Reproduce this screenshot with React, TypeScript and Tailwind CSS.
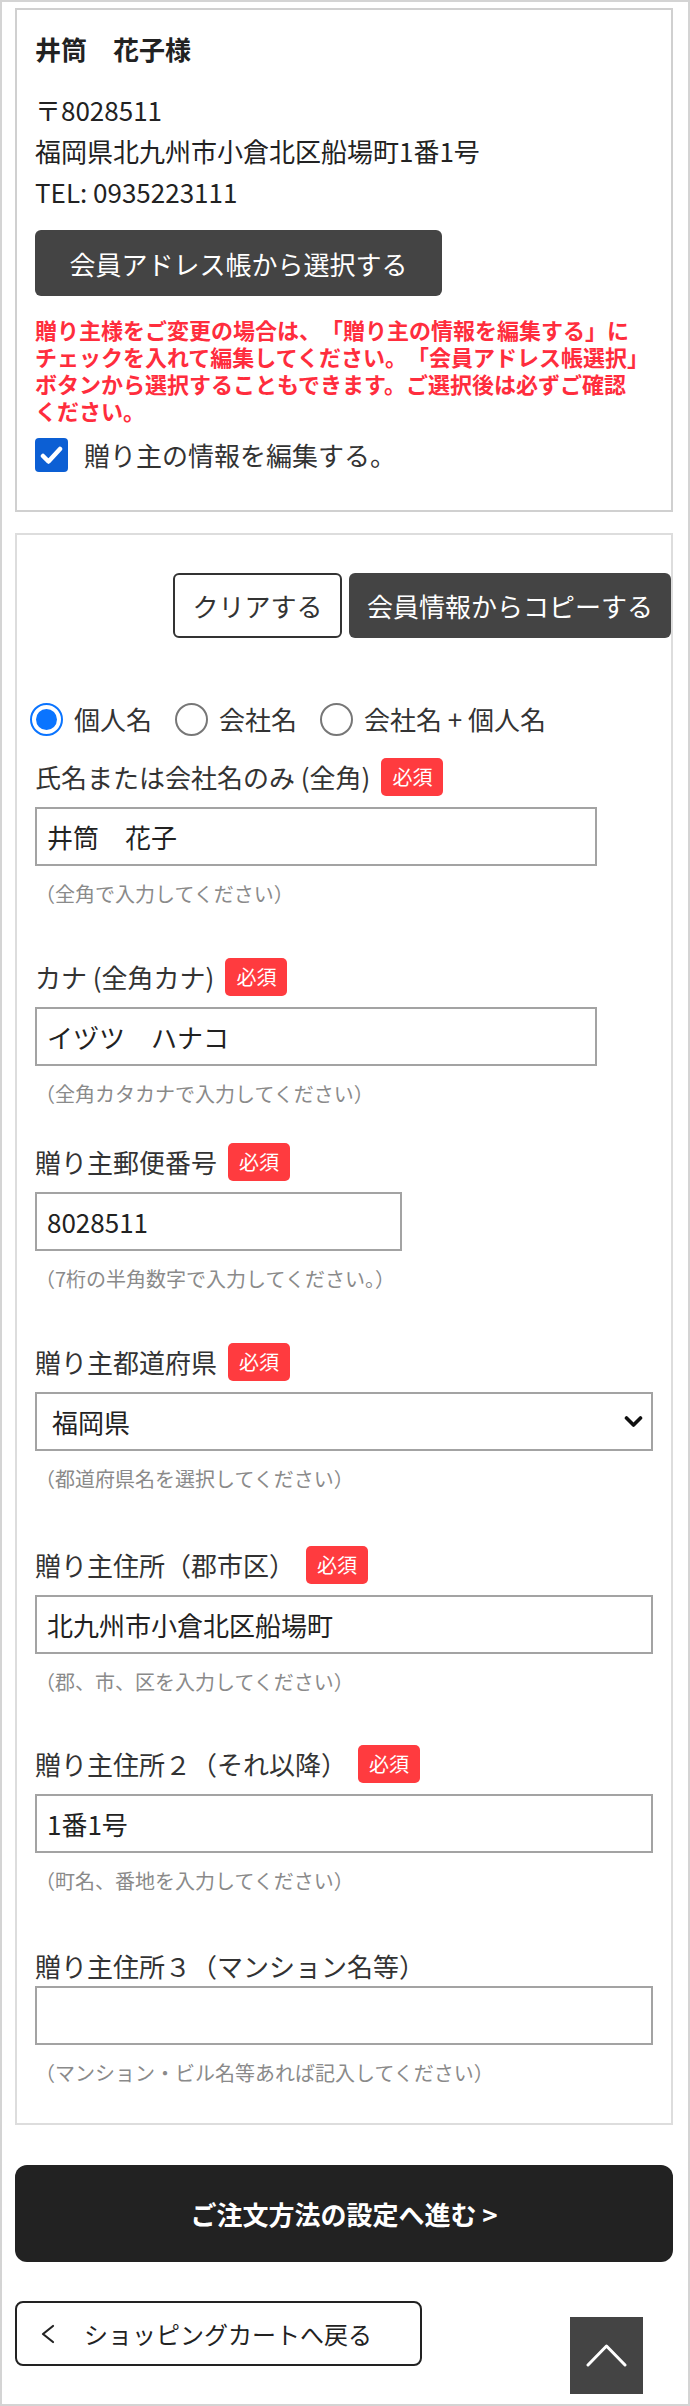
import React from 'react'

const font = "font-['Noto_Sans_CJK_JP','Noto_Sans',sans-serif]"

interface FieldProps {
  label: string
  required?: boolean
  value: string
  hint: string
  wrapClass: string
  inputClass: string
  inputGap?: string
}

function Badge() {
  return (
    <span className="flex h-[38px] items-center rounded-[5px] bg-[#ff3b3f] px-[11px] text-[20px] leading-none text-white">
      必須
    </span>
  )
}

function Field({ label, required, value, hint, wrapClass, inputClass, inputGap = 'mt-[11px]' }: FieldProps) {
  return (
    <div className={wrapClass}>
      <div className="flex h-[38px] items-center gap-[11px]">
        <span className="text-[26px] leading-none text-[#333]">{label}</span>
        {required && <Badge />}
      </div>
      <input
        type="text"
        defaultValue={value}
        className={`${inputGap} ${inputClass} block h-[59px] border-2 border-[#a3a3a3] bg-white px-[10px] text-[26px] text-[#222] outline-none`}
      />
      <p className="mt-[13px] text-[20px] leading-[30px] text-[#8a8a8a]">{hint}</p>
    </div>
  )
}

function Radio({ checked, label }: { checked?: boolean; label: string }) {
  return (
    <label className="flex items-center gap-[11px]">
      {checked ? (
        <span className="flex h-[33px] w-[33px] items-center justify-center rounded-full border-[2.5px] border-[#0a74ff] bg-white">
          <span className="h-[21px] w-[21px] rounded-full bg-[#0a74ff]" />
        </span>
      ) : (
        <span className="h-[33px] w-[33px] rounded-full border-2 border-[#777] bg-white" />
      )}
      <span className="text-[26px] leading-none text-[#333]">{label}</span>
    </label>
  )
}

export default function App() {
  return (
    <div className={`${font} relative h-[2406px] w-[690px] border-2 border-[#d4d4d4] bg-white pl-[13px] pr-[15px] pt-[6px]`}>
      {/* 贈り主情報 */}
      <section className="border-2 border-[#d0d0d0] px-[18px] pb-[38px] pt-[19px]">
        <p className="text-[26px] font-bold leading-[39px] text-[#222]">井筒　花子様</p>
        <div className="mt-[21px] text-[26px] leading-[41px] text-[#222]">
          <p>〒8028511</p>
          <p>福岡県北九州市小倉北区船場町1番1号</p>
          <p>TEL: 0935223111</p>
        </div>
        <button className="mt-[18px] flex h-[66px] w-[407px] items-center justify-center rounded-[6px] bg-[#444] text-[26px] text-white">
          会員アドレス帳から選択する
        </button>
        <div className="mt-[20px] whitespace-nowrap text-[22px] font-bold leading-[27px] text-[#ff2d3d] [text-spacing-trim:space-all]">
          <p>贈り主様をご変更の場合は、「贈り主の情報を編集する」に</p>
          <p>チェックを入れて編集してください。「会員アドレス帳選択」</p>
          <p>ボタンから選択することもできます。ご選択後は必ずご確認</p>
          <p>ください。</p>
        </div>
        <label className="mt-[14px] flex items-center gap-[16px]">
          <span className="flex h-[34px] w-[33px] items-center justify-center rounded-[4px] bg-[#0c5fd4]">
            <svg width="23" height="19" viewBox="0 0 23 19" fill="none">
              <polyline points="3,10 8.5,15.5 20,3" stroke="white" strokeWidth="4.5" strokeLinecap="round" strokeLinejoin="round" />
            </svg>
          </span>
          <span className="text-[26px] leading-none text-[#333]">贈り主の情報を編集する。</span>
        </label>
      </section>

      {/* 入力フォーム */}
      <section className="mt-[21px] border-2 border-[#dddddd] px-[18px] pb-[35px] pt-[38px]">
        <div className="-mr-[18px] flex justify-end gap-[7px]">
          <button className="flex h-[65px] w-[169px] items-center justify-center rounded-[6px] border-2 border-[#333] bg-white text-[26px] text-[#333]">
            クリアする
          </button>
          <button className="flex h-[65px] w-[322px] items-center justify-center rounded-[6px] bg-[#444] text-[26px] text-white">
            会員情報からコピーする
          </button>
        </div>

        <div className="-ml-[5px] mt-[64px] flex h-[34px] items-center gap-[23px]">
          <Radio checked label="個人名" />
          <Radio label="会社名" />
          <Radio label="会社名 + 個人名" />
        </div>

        <Field
          wrapClass="mt-[22px]"
          label="氏名または会社名のみ (全角)"
          required
          value="井筒　花子"
          inputClass="w-[562px]"
          hint="（全角で入力してください）"
        />
        <Field
          wrapClass="mt-[49px]"
          label="カナ (全角カナ)"
          required
          value="イヅツ　ハナコ"
          inputClass="w-[562px]"
          hint="（全角カタカナで入力してください）"
        />
        <Field
          wrapClass="mt-[34px]"
          label="贈り主郵便番号"
          required
          value="8028511"
          inputClass="w-[367px]"
          hint="（7桁の半角数字で入力してください。）"
        />

        <div className="mt-[49px]">
          <div className="flex h-[38px] items-center gap-[11px]">
            <span className="text-[26px] leading-none text-[#333]">贈り主都道府県</span>
            <Badge />
          </div>
          <div className="relative mt-[11px] w-full">
            <select
              defaultValue="福岡県"
              className="block h-[59px] w-full appearance-none border-2 border-[#a3a3a3] bg-white pl-[15px] text-[26px] text-[#222] outline-none"
            >
              <option>福岡県</option>
            </select>
            <svg
              className="pointer-events-none absolute right-[10px] top-1/2 -translate-y-1/2"
              width="19"
              height="13"
              viewBox="0 0 19 13"
              fill="none"
            >
              <polyline points="2.5,2.5 9.5,9.5 16.5,2.5" stroke="#111" strokeWidth="3.6" strokeLinecap="round" strokeLinejoin="round" />
            </svg>
          </div>
          <p className="mt-[13px] text-[20px] leading-[30px] text-[#8a8a8a]">（都道府県名を選択してください）</p>
        </div>

        <Field
          wrapClass="mt-[52px]"
          label="贈り主住所（郡市区）"
          required
          value="北九州市小倉北区船場町"
          inputClass="w-full"
          hint="（郡、市、区を入力してください）"
        />
        <Field
          wrapClass="mt-[48px]"
          label="贈り主住所２（それ以降）"
          required
          value="1番1号"
          inputClass="w-full"
          hint="（町名、番地を入力してください）"
        />
        <Field
          wrapClass="mt-[51px]"
          label="贈り主住所３（マンション名等）"
          value=""
          inputGap="mt-[1px]"
          inputClass="w-full"
          hint="（マンション・ビル名等あれば記入してください）"
        />
      </section>

      <button className="mt-[40px] flex h-[97px] w-full items-center justify-center rounded-[12px] bg-[#222] text-[26px] font-bold text-white">
        ご注文方法の設定へ進む &gt;
      </button>

      <button className="mt-[39px] flex h-[65px] w-[407px] items-center rounded-[8px] border-2 border-[#222] bg-white pl-[23px] text-[24px] text-[#222]">
        <svg width="16" height="20" viewBox="0 0 16 20" fill="none">
          <polyline points="13,2 3,10 13,18" stroke="#222" strokeWidth="2.2" strokeLinecap="round" strokeLinejoin="round" />
        </svg>
        <span className="ml-[28px]">ショッピングカートへ戻る</span>
      </button>

      {/* ページトップ */}
      <button className="absolute left-[568px] top-[2315px] flex h-[77px] w-[73px] items-center justify-center bg-[#444]">
        <svg width="41" height="25" viewBox="0 0 41 25" fill="none">
          <polyline points="2,22 20.5,3 39,22" stroke="white" strokeWidth="3" strokeLinecap="round" strokeLinejoin="round" />
        </svg>
      </button>
    </div>
  )
}
